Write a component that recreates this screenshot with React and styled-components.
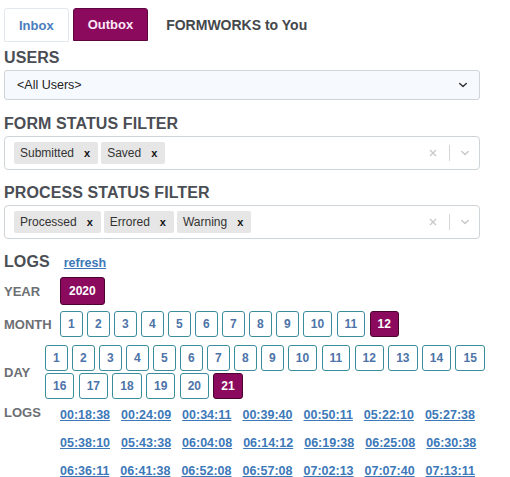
import React from "react";
import styled, { createGlobalStyle } from "styled-components";

const colors = {
  magenta: "#8b0a5d",
  heading: "#4a4e54",
  label: "#6c6f73",
  link: "#3d78b8",
  btnBorder: "#3a8e9c",
  btnText: "#4d74a8",
  border: "#cfd4d8",
};

const GlobalStyle = createGlobalStyle`
  body {
    margin: 0;
    background: #fff;
    font-family: "Liberation Sans", Arial, sans-serif;
  }
`;

const Page = styled.div`
  padding: 8px 0 0 4px;
  width: 476px;
`;

const Tabs = styled.div`
  display: flex;
  align-items: stretch;
  gap: 4px;
  height: 34px;
`;

const Tab = styled.div`
  display: flex;
  align-items: center;
  padding: 0 14px;
  font-size: 13px;
  font-weight: bold;
  border-radius: 3px 3px 0 0;
  border: 1px solid ${(p) => (p.active ? "#5e0640" : "#e2e8ee")};
  background: ${(p) => (p.active ? colors.magenta : "#fff")};
  color: ${(p) => (p.active ? "#fde8f6" : "#4a7dbd")};
  height: ${(p) => (p.active ? "33px" : "34px")};
  box-sizing: border-box;
`;

const TabTitle = styled.div`
  display: flex;
  align-items: center;
  margin-left: 14px;
  font-size: 14px;
  font-weight: bold;
  color: #44474b;
`;

const Heading = styled.div`
  font-size: 16px;
  font-weight: bold;
  color: ${colors.heading};
  line-height: 18px;
  margin-top: ${(p) => p.top || "14px"};
  margin-bottom: 3px;
  letter-spacing: 0.1px;
`;

const Select = styled.div`
  display: flex;
  align-items: center;
  justify-content: space-between;
  height: 30px;
  box-sizing: border-box;
  padding: 0 10px 0 12px;
  border: 1px solid ${colors.border};
  border-radius: 3px;
  background: #f6faff;
  font-size: 12.5px;
  color: #222;
`;

const MultiBox = styled.div`
  display: flex;
  align-items: center;
  height: 34px;
  box-sizing: border-box;
  padding: 0 8px 0 9px;
  border: 1px solid ${colors.border};
  border-radius: 4px;
  background: #fff;
`;

const Chips = styled.div`
  display: flex;
  gap: 3px;
  flex: 1;
`;

const Chip = styled.div`
  display: flex;
  align-items: center;
  height: 22px;
  background: #e6e6e6;
  border-radius: 2px;
  font-size: 12px;
  color: #333;
  padding-left: 6px;
`;

const ChipRemove = styled.span`
  font-size: 11px;
  font-weight: bold;
  color: #111;
  padding: 0 8px 0 10px;
`;

const Indicators = styled.div`
  display: flex;
  align-items: center;
  color: #c8c8c8;
`;

const Separator = styled.span`
  width: 1px;
  height: 16px;
  background: #d6d6d6;
  margin: 0 9px 0 10px;
`;

const LogsHeader = styled.div`
  display: flex;
  align-items: baseline;
  gap: 14px;
  margin-top: 14px;
`;

const RefreshLink = styled.a`
  font-size: 12.5px;
  font-weight: bold;
  color: ${colors.link};
  text-decoration: underline;
`;

const Row = styled.div`
  display: flex;
  align-items: ${(p) => p.align || "center"};
  margin-top: ${(p) => p.top || "0"};
`;

const RowLabel = styled.div`
  flex: 0 0 ${(p) => p.width || "56px"};
  font-size: 13px;
  font-weight: bold;
  color: ${colors.label};
  line-height: ${(p) => p.lh || "normal"};
`;

const Buttons = styled.div`
  display: flex;
  flex-wrap: wrap;
  flex-shrink: 0;
  column-gap: 4.3px;
  row-gap: 2px;
  width: ${(p) => p.width || "auto"};
`;

const NumButton = styled.div`
  display: flex;
  align-items: center;
  justify-content: center;
  box-sizing: border-box;
  height: ${(p) => p.h || "26px"};
  padding: 0 ${(p) => p.px || "7px"};
  border: 1px solid ${(p) => (p.active ? "#4a0430" : colors.btnBorder)};
  border-radius: 3px;
  background: ${(p) => (p.active ? colors.magenta : "#fff")};
  color: ${(p) => (p.active ? "#fff" : colors.btnText)};
  font-size: 12px;
  font-weight: bold;
`;

const Times = styled.div`
  display: flex;
  flex-wrap: wrap;
  flex-shrink: 0;
  width: 434px;
`;

const TimeLink = styled.a`
  font-size: 12.5px;
  font-weight: bold;
  color: ${colors.link};
  text-decoration: underline;
  line-height: 28px;
  margin-right: 11px;
`;

const Chevron = ({ color }) => (
  <svg width="12" height="12" viewBox="0 0 20 20">
    <path
      d="M4.5 7.5 L10 12.5 L15.5 7.5"
      fill="none"
      stroke={color}
      strokeWidth="2.4"
      strokeLinecap="round"
      strokeLinejoin="round"
    />
  </svg>
);

const Cross = () => (
  <svg width="12" height="12" viewBox="0 0 20 20">
    <path d="M5 5 L15 15 M15 5 L5 15" stroke="#c8c8c8" strokeWidth="2.2" />
  </svg>
);

const MultiSelect = ({ values }) => (
  <MultiBox>
    <Chips>
      {values.map((v) => (
        <Chip key={v}>
          {v}
          <ChipRemove>x</ChipRemove>
        </Chip>
      ))}
    </Chips>
    <Indicators>
      <Cross />
      <Separator />
      <Chevron color="#c8c8c8" />
    </Indicators>
  </MultiBox>
);

const times = [
  "00:18:38", "00:24:09", "00:34:11", "00:39:40", "00:50:11", "05:22:10", "05:27:38",
  "05:38:10", "05:43:38", "06:04:08", "06:14:12", "06:19:38", "06:25:08", "06:30:38",
  "06:36:11", "06:41:38", "06:52:08", "06:57:08", "07:02:13", "07:07:40", "07:13:11",
];

const months = Array.from({ length: 12 }, (_, i) => i + 1);
const days = Array.from({ length: 21 }, (_, i) => i + 1);

export default function App() {
  return (
    <>
      <GlobalStyle />
      <Page>
        <Tabs>
          <Tab>Inbox</Tab>
          <Tab active>Outbox</Tab>
          <TabTitle>FORMWORKS to You</TabTitle>
        </Tabs>

        <Heading top="7px">USERS</Heading>
        <Select>
          <span>&lt;All Users&gt;</span>
          <Chevron color="#333" />
        </Select>

        <Heading top="15px">FORM STATUS FILTER</Heading>
        <MultiSelect values={["Submitted", "Saved"]} />

        <Heading>PROCESS STATUS FILTER</Heading>
        <MultiSelect values={["Processed", "Errored", "Warning"]} />

        <LogsHeader>
          <Heading top="0">LOGS</Heading>
          <RefreshLink href="#">refresh</RefreshLink>
        </LogsHeader>

        <Row top="3px">
          <RowLabel>YEAR</RowLabel>
          <NumButton active h="28px" px="8px">2020</NumButton>
        </Row>

        <Row top="6px">
          <RowLabel>MONTH</RowLabel>
          <Buttons>
            {months.map((m) => (
              <NumButton key={m} active={m === 12}>{m}</NumButton>
            ))}
          </Buttons>
        </Row>

        <Row top="8px">
          <RowLabel width="41px">DAY</RowLabel>
          <Buttons width="446px">
            {days.map((d) => (
              <NumButton key={d} active={d === 21}>{d}</NumButton>
            ))}
          </Buttons>
        </Row>

        <Row top="2px" align="flex-start">
          <RowLabel lh="24px">LOGS</RowLabel>
          <Times>
            {times.map((t) => (
              <TimeLink key={t} href="#">{t}</TimeLink>
            ))}
          </Times>
        </Row>
      </Page>
    </>
  );
}
